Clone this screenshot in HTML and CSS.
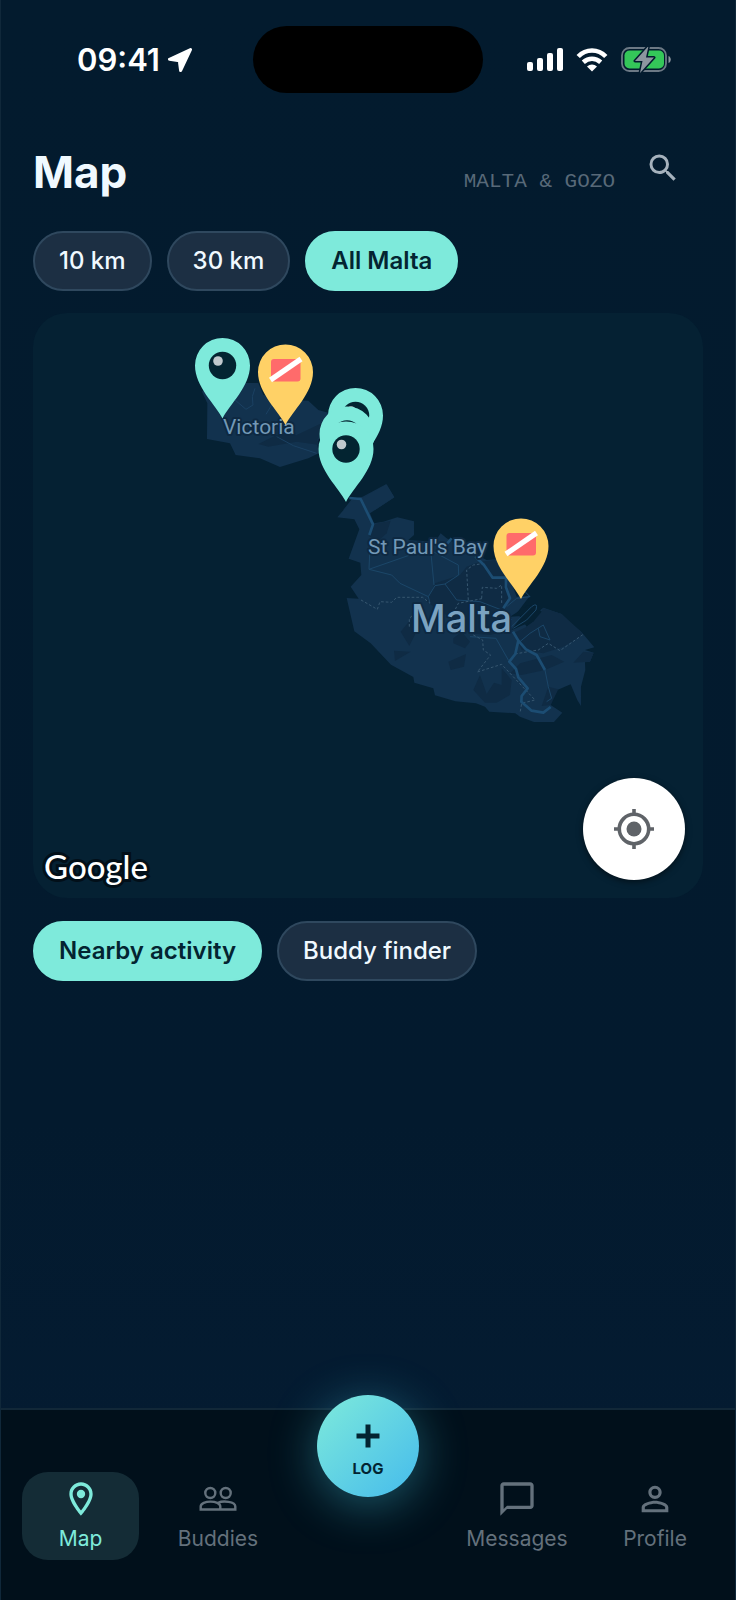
FILE: index.html
```html
<!DOCTYPE html>
<html lang="en">
<head>
  <meta charset="UTF-8" />
  <meta name="viewport" content="width=device-width, initial-scale=1" />
  <title>Map</title>
  <link rel="stylesheet" href="styles.css">
</head>
<body>
<div class="app">

  <div class="status">
    <div class="status-left">
      <span class="time">09:41</span>
      <svg width="24" height="24" viewBox="0 0 24 24"><path fill="#fff" stroke="#fff" stroke-width="3" stroke-linejoin="round" d="M22.500 1.500L1.500 11.300L11.300 12.700L12.600 22.500Z"/></svg>
    </div>
    <div class="island"></div>
    <div class="status-right">
      <svg width="36" height="24" viewBox="0 0 36 24" fill="#fff">
        <rect x="0" y="14" width="6" height="9" rx="2"/>
        <rect x="10" y="10" width="6" height="13" rx="2"/>
        <rect x="20" y="5" width="6" height="18" rx="2"/>
        <rect x="30" y="0" width="6" height="23" rx="2"/>
      </svg>
      <svg width="32" height="24" viewBox="0 0 32 24" fill="none" stroke="#fff" stroke-width="4.600">
        <path d="M2.200 8.500C10 .5 22 .5 29.800 8.500"/>
        <path d="M7.300 14.300C12.500 9.600 19.500 9.600 24.700 14.300"/>
        <path fill="#fff" stroke="none" d="M11 18.500C14 15.800 18 15.800 21 18.500L16 23.500Z"/>
      </svg>
      <svg width="50" height="26" viewBox="0 0 50 26">
        <rect x="1" y="1" width="44" height="23" rx="7.500" fill="none" stroke="#6c7985" stroke-width="1.800"/>
        <path fill="#8d969f" d="M47.500 9C50.500 10 50.500 15 47.500 16Z"/>
        <rect x="3.500" y="3.500" width="39.500" height="18" rx="5" fill="#34c759"/>
        <path fill="#8d969f" stroke="#031b2e" stroke-width="3" stroke-linejoin="round" paint-order="stroke" d="M27.500 -1L14 14H21.500L19 26L33 10.500H25Z"/>
      </svg>
    </div>
  </div>

  <header class="header">
    <h1>Map</h1>
    <span class="region">MALTA &amp; GOZO</span>
    <button class="search" type="button" aria-label="Search">
      <svg width="36" height="36" viewBox="0 0 24 24" fill="#a6b2bd"><path d="M15.500 14h-.79l-.28-.27A6.471 6.471 0 0 0 16 9.500 6.500 6.500 0 1 0 9.500 16c1.610 0 3.090-.59 4.230-1.570l.27.28v.79l5 4.990L20.490 19l-4.990-5zm-6 0C7.010 14 5 11.990 5 9.500S7.010 5 9.500 5 14 7.010 14 9.500 11.990 14 9.500 14z"/></svg>
    </button>
  </header>

  <div class="chips">
    <button class="chip" type="button">10 km</button>
    <button class="chip" type="button">30 km</button>
    <button class="chip active" type="button">All Malta</button>
  </div>

  <main class="map">
    <svg class="map-svg" viewBox="33 313 670 585">
      <defs>
        <path id="pin" d="M0 0C-7 -14 -27.500 -32 -27.500 -53A27.500 27.500 0 0 1 27.500 -53C27.500 -32 7 -14 0 0Z"/>
        <g id="dive">
          <use href="#pin" fill="#7eeadb"/>
          <circle cy="-53" r="13.700" fill="#032431"/>
          <circle cx="-4.500" cy="-57.500" r="4.800" fill="#c0c8cc"/>
        </g>
        <g id="flag">
          <use href="#pin" fill="#ffd166"/>
          <rect x="-14.500" y="-66" width="29.500" height="22.500" rx="3" fill="#ff6b6b"/>
          <path d="M-15 -45L15.500 -66" stroke="#fff" stroke-width="5.200"/>
        </g>
      </defs>

      <!-- Gozo -->
      <g transform="translate(180 320) scale(.3333)">
        <path fill="#12324e" d="M66 215L90 189H235L250 225L315 240L385 242L415 270L450 280L425 330L412 372L416 400L385 415L300 441L240 415L167 405L150 370L81 357L82 250Z"/>
        <path fill="#0f2b44" d="M290 345L350 345L445 300L412 360L418 375L350 365L265 380L235 372Z"/>
        <g fill="none" stroke="#1b4162" stroke-width="3">
          <path d="M165 240L198 268L219 255L217 230L225 205M258 283L275 255M290 350L340 377L410 400"/>
        </g>
        <path fill="#12324e" d="M490 570L515 538L548 530L618 493L643 532L585 570Z"/>
      </g>

      <!-- Malta -->
      <g transform="translate(330 470) scale(.3333)">
        <path fill="#12324e" d="M22 142L62 95L98 83L170 43L193 82L120 130L132 160L160 155L202 142L252 154V195L235 210L315 215L332 190L350 205L385 225L430 250L470 270L500 268L530 300L560 380L600 378L590 390L560 430L575 445L590 470L612 455L620 430L640 413L695 432L722 460L755 487L793 532L765 540L791 548L780 575L765 577L766 600L753 650V708L742 690L722 643L682 660L670 680L662 705L697 728L672 756H612L570 740L556 730L478 725L465 710L438 700L376 694L315 676L310 655L253 638L250 621L183 584L122 520L73 484L50 384L86 386L62 350L94 315L91 278L56 266L88 178L73 148Z"/>
        <g fill="#0f2b44">
          <path d="M132 162L182 152L170 190L150 208L118 200Z"/>
          <path d="M315 340L390 315L410 290L450 275L495 270L530 330L540 380L520 405L545 480L480 495L420 490L370 450L290 395Z"/>
          <path d="M550 490L590 470L615 450L640 415L695 432L755 487L760 495L700 530L640 550L575 540Z"/>
          <path d="M212 485L245 445L262 480L238 528Z"/><path d="M192 542L242 545L195 573Z"/><path d="M355 575L408 552L402 590L362 600Z"/>
          <path d="M430 660L450 615L470 672L492 638L515 645V595L545 630L540 675L500 698H465Z"/>
          <path d="M540 610L570 580L665 555L703 575L645 600L575 615Z"/><path d="M730 578L760 545L791 548L780 575Z"/>
          <path d="M655 650L685 658L662 705L635 708Z"/><path d="M370 505L395 485L420 515L405 535L370 520Z"/>
        </g>
        <path fill="#052133" d="M540 440L595 405L620 410L635 425L610 455L580 465L545 480L575 438Z"/>
        <g fill="none" stroke="#1b4668" stroke-width="3">
          <path d="M117 298L240 255L300 240L385 285L386 315L345 342L315 347L295 380M302 240L312 345M345 342L380 390L450 395M117 298L185 315L210 340L295 380L300 400M120 230L117 298M450 395L515 420L545 450M420 500L498 505L535 570M545 470L605 410Q625 395 618 420L590 450L550 475M570 515L600 490L640 465L660 510L630 500L625 475M645 600L655 650L665 685L650 695M530 410L560 385L600 380L580 360"/>
        </g>
        <g fill="none" stroke="#36566f" stroke-width="3" stroke-dasharray="8 6">
          <path d="M93 390L142 418L150 395L185 397L200 382H278L300 400M415 390L410 300L430 285L465 280M455 385L457 352L500 355L515 345V400M430 495L458 510L460 540L482 555L442 606L515 583L615 690L575 700L570 730M555 552L595 545L625 540L655 520L690 542L760 493M370 430L385 400L460 385M238 470V445L260 425"/>
        </g>
        <g fill="none" stroke="#1c4d73" stroke-width="8" stroke-linejoin="round">
          <path d="M58 84L92 87L129 163L118 195M436 260L462 285L488 323H528V352L540 385L520 415M365 205L330 245M549 485L565 512L588 538L620 555L645 600M565 512L556 552L538 575L558 597L565 622L593 655L575 678L574 695L605 722L640 728L662 711"/>
        </g>
      </g>

      <g class="place">
        <text x="223" y="434">Victoria</text>
        <text x="368" y="554">St Paul's Bay</text>
        <text class="country" x="411" y="632">Malta</text>
      </g>

      <use href="#dive" x="222.500" y="418.500"/>
      <use href="#flag" x="285.500" y="425"/>
      <use href="#dive" x="355.500" y="468.500"/>
      <use href="#dive" x="347" y="487"/>
      <use href="#dive" x="346" y="502"/>
      <use href="#flag" x="521" y="599"/>
    </svg>
    <span class="google">Google</span>
    <button class="locate" type="button" aria-label="My location">
      <svg width="42" height="42" viewBox="0 0 42 42" fill="none" stroke="#5f6368">
        <circle cx="21" cy="21" r="14.700" stroke-width="3.600"/>
        <circle cx="21" cy="21" r="7.500" fill="#5f6368" stroke="none"/>
        <path stroke-width="3.600" d="M21 1v5M21 36v5M1 21h5M36 21h5"/>
      </svg>
    </button>
  </main>

  <div class="chips">
    <button class="chip active" type="button">Nearby activity</button>
    <button class="chip" type="button">Buddy finder</button>
  </div>

  <nav class="tabs">
    <a class="tab current" href="#map">
      <svg width="40" height="40" viewBox="0 0 24 24" fill="currentColor"><path d="M12 2C8.130 2 5 5.130 5 9c0 5.250 7 13 7 13s7-7.750 7-13c0-3.870-3.130-7-7-7zM7 9c0-2.760 2.240-5 5-5s5 2.240 5 5c0 2.880-2.880 7.190-5 9.880C9.920 16.210 7 11.850 7 9z"/><circle cx="12" cy="9" r="2.500"/></svg>
      Map
    </a>
    <a class="tab" href="#buddies">
      <svg width="40" height="40" viewBox="0 0 40 40" fill="none" stroke="currentColor" stroke-width="2.400">
        <circle cx="12.300" cy="14" r="5"/><circle cx="27.700" cy="14" r="5"/>
        <path d="M2.700 30.500V27.500C2.700 21 22.300 21 22.300 27.500V30.500ZM20 23.800C25 21.500 37.300 22.500 37.300 27.500V30.500H22"/>
      </svg>
      Buddies
    </a>
    <button class="log" type="button">
      <svg width="24" height="24" viewBox="0 0 24 24"><path stroke="#032431" stroke-width="5" d="M12 .5v23M.5 12h23"/></svg>
      LOG
    </button>
    <a class="tab" href="#messages">
      <svg width="40" height="40" viewBox="0 0 24 24" fill="currentColor"><path d="M20 2H4c-1.100 0-2 .9-2 2v18l4-4h14c1.100 0 2-.9 2-2V4c0-1.100-.9-2-2-2zm0 14H6l-2 2V4h16v12z"/></svg>
      Messages
    </a>
    <a class="tab" href="#profile">
      <svg width="40" height="40" viewBox="0 0 24 24" fill="currentColor"><path d="M12 5.900a2.100 2.100 0 1 1 0 4.200 2.100 2.100 0 0 1 0-4.200m0 9c2.970 0 6.100 1.460 6.100 2.100v1.100H5.900V17c0-.64 3.130-2.100 6.100-2.100M12 4C9.790 4 8 5.790 8 8s1.790 4 4 4 4-1.790 4-4-1.790-4-4-4zm0 9c-2.670 0-8 1.340-8 4v3h16v-3c0-2.660-5.330-4-8-4z"/></svg>
      Profile
    </a>
  </nav>

</div>
</body>
</html>
```
FILE: styles.css
```css
* {
  box-sizing: border-box;
}
body {
  margin: 0;
  background: #031b2e;
  color: #f0f9ff;
  font-family: Inter, "Liberation Sans", sans-serif;
}
button {
  font: inherit;
  color: inherit;
  border: none;
  background: none;
  padding: 0;
  cursor: pointer;
}
svg {
  display: block;
  flex: none;
}
.app {
  min-height: 100vh;
  display: flex;
  flex-direction: column;
  background: linear-gradient(#031b2e, #031a2e 70%, #051c33);
  border-left: 1px solid #10283a;
  border-right: 1px solid #10283a;
}

/* status bar */
.status {
  display: grid;
  grid-template-columns: 1fr 230px 1fr;
  align-items: center;
  padding-top: 26px;
}
.status-left {
  display: flex;
  align-items: center;
  gap: 8px;
  padding-left: 76px;
}
.time {
  font-size: 31px;
  line-height: 36px;
  font-weight: 600;
  color: #fff;
}
.island {
  height: 67px;
  border-radius: 34px;
  background: #000;
}
.status-right {
  display: flex;
  align-items: center;
  justify-content: flex-end;
  gap: 13px;
  padding-right: 64px;
}

/* title row */
.header {
  display: flex;
  align-items: center;
  padding: 50px 54px 0 32px;
}
h1 {
  flex: 1;
  margin: 0;
  font-size: 44px;
  line-height: 58px;
  font-weight: 700;
}
.region {
  font-family: "Liberation Mono", monospace;
  font-size: 21px;
  line-height: 24px;
  padding-top: 20px;
  color: #586978;
}
.search {
  margin: 0 0 8px 30px;
}

/* pills */
.chips {
  display: flex;
  gap: 15px;
  padding: 30px 32px 0;
}
.chip {
  height: 60px;
  padding: 0 24px;
  border: 2px solid #2f485e;
  border-radius: 30px;
  background: #1c2f43;
  font-size: 24px;
  line-height: 28px;
  font-weight: 500;
}
.chip.active {
  border-color: #7eeadb;
  background: #7eeadb;
  color: #032431;
  font-weight: 600;
}

/* map card */
.map {
  position: relative;
  margin: 22px 32px 0;
  border-radius: 34px;
  background: #052133;
  overflow: hidden;
}
.map + .chips {
  padding-top: 23px;
}
.map-svg {
  width: 100%;
  height: auto;
}
.place text {
  fill: #7399b7;
  stroke: #0e2942;
  stroke-width: 4px;
  paint-order: stroke;
  stroke-linejoin: round;
  font-family: Roboto, sans-serif;
  font-size: 21px;
}
.place .country {
  font-family: Inter, sans-serif;
  font-size: 38px;
  font-weight: 500;
  fill: #7ba3c1;
}
.google {
  position: absolute;
  left: 11px;
  bottom: 12px;
  font-family: Lato, sans-serif;
  font-size: 33px;
  line-height: 40px;
  font-weight: 500;
  color: #fff;
  -webkit-text-stroke: 6px #020f19;
  paint-order: stroke fill;
}
.locate {
  position: absolute;
  right: 18px;
  bottom: 18px;
  width: 102px;
  height: 102px;
  border-radius: 50%;
  background: #fff;
  display: grid;
  place-items: center;
  box-shadow: 0 2px 6px rgba(0, 0, 0, 0.5);
}

/* bottom bar */
.tabs {
  margin-top: auto;
  height: 192px;
  display: grid;
  grid-template-columns: 117fr 158fr 142fr 156fr 120fr;
  align-items: start;
  padding: 62px 20px 0 21px;
  border-top: 2px solid #122838;
  background: #01101b;
}
.tab {
  height: 88px;
  display: flex;
  flex-direction: column;
  align-items: center;
  gap: 7px;
  padding-top: 7px;
  border-radius: 26px;
  color: #64717c;
  font-size: 21px;
  line-height: 26px;
  text-decoration: none;
}
.tab.current {
  background: #142c36;
  color: #7eeadb;
}
.log {
  justify-self: center;
  width: 102px;
  height: 102px;
  margin-top: -77px;
  border-radius: 50%;
  background: linear-gradient(135deg, #7eeadb, #45bbec);
  box-shadow: 0 8px 48px rgba(72, 202, 228, 0.4);
  display: flex;
  flex-direction: column;
  align-items: center;
  gap: 12px;
  padding-top: 29px;
  color: #032431;
  font-size: 15px;
  line-height: 18px;
  font-weight: 700;
}
```
